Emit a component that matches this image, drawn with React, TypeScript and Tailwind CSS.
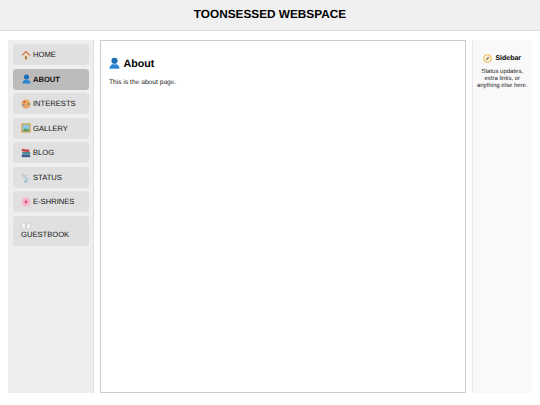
const F = { fontFamily: '"Liberation Sans", Arial, sans-serif' };

function Nav({ icon, label, active, wrap }: { icon: React.ReactNode; label: string; active?: boolean; wrap?: boolean }) {
  return (
    <div
      className={`rounded-[3.5px] px-[8px] text-[7.6px] text-[#111] ${active ? "bg-[#bbbbbb] font-bold" : "bg-[#e0e0e0]"} ${wrap ? "h-[30px] pt-[6px] leading-[8.5px]" : "flex h-[21px] items-center leading-[9px]"}`}
    >
      <span className={`${wrap ? "block h-[9px]" : "mr-[2px] inline-flex w-[10px] justify-center"}`}>{icon}</span>
      <span className={wrap ? "block" : ""}>{label}</span>
    </div>
  );
}

const Home = () => (
  <svg width="10" height="10" viewBox="0 0 12 12"><rect x="2.2" y="5" width="7.6" height="6.2" fill="#ead9c2" /><path d="M6 1 .6 6.2 1.6 7 6 2.9 10.4 7 11.4 6.2Z" fill="#d0693a" /><rect x="5" y="7.4" width="2" height="3.8" fill="#a86a3a" /></svg>
);
const Person = ({ s = 9 }: { s?: number }) => (
  <svg width={s} height={s * 1.1} viewBox="0 0 12 13"><circle cx="6" cy="4" r="3.4" fill="#1c6fb5" /><path d="M0.5 12.6C0.5 9.5 3 8 4.5 7.6L6 8.4 7.5 7.6C9 8 11.5 9.5 11.5 12.6Z" fill="#2a86d2" /></svg>
);
const Palette = () => (
  <svg width="10" height="10" viewBox="0 0 12 12"><circle cx="6" cy="6" r="5.4" fill="#eaa468" /><circle cx="4" cy="3.6" r="1.2" fill="#d84a3a" /><circle cx="7.6" cy="3.2" r="1.1" fill="#e8c040" /><circle cx="9.3" cy="6" r="1.1" fill="#5a9a50" /><circle cx="3" cy="7" r="1.1" fill="#6a90c8" /></svg>
);
const Gallery = () => (
  <svg width="10" height="10" viewBox="0 0 12 12"><rect x="0.5" y="0.5" width="11" height="11" fill="#d0a040" /><rect x="2" y="2" width="8" height="8" fill="#88c8e8" /><path d="M2 10 5 6 7 8 8.5 6.5 10 10Z" fill="#5a9a50" /></svg>
);
const Books = () => (
  <svg width="10" height="10" viewBox="0 0 12 12"><rect x="1" y="1.5" width="9" height="3" fill="#c84848" transform="rotate(8 5 3)" /><rect x="1.5" y="4.8" width="9.5" height="3" fill="#4a8a98" /><rect x="1" y="8" width="10" height="3" fill="#3a5a88" /></svg>
);
const Dish = () => (
  <svg width="10" height="11" viewBox="0 0 12 13"><path d="M1.5 1.5C1.5 6 5 9.5 9.5 9.5Z" fill="#c4dae2" stroke="#9ab8c4" strokeWidth=".6" /><path d="M5.5 5.5 8 3" stroke="#8aa8b4" strokeWidth=".8" /><path d="M5 9 3.5 12.5H8L6.8 9.8Z" fill="#8fc0d0" /></svg>
);
const Flower = () => (
  <svg width="10" height="10" viewBox="0 0 12 12"><circle cx="6" cy="6" r="5.4" fill="#f6b8cc" /><circle cx="6" cy="6" r="1.7" fill="#e04a7c" /></svg>
);
const Book = () => (
  <svg width="10" height="8" viewBox="0 0 12 9"><path d="M0.5 1H5.6V8H0.5ZM6.4 1H11.5V8H6.4Z" fill="#f2f2f2" stroke="#c4c4c4" strokeWidth=".7" /></svg>
);
const Compass = () => (
  <svg width="9" height="9" viewBox="0 0 12 12"><circle cx="6" cy="6" r="5.2" fill="#fff6dc" stroke="#e8b848" strokeWidth="1.3" /><path d="M8.6 3.4 5 5 3.4 8.6 7 7Z" fill="#8a8a70" /></svg>
);

export default function App() {
  return (
    <div style={F} className="flex h-[405px] w-[540px] flex-col overflow-hidden bg-white text-black [text-rendering:geometricPrecision]">
      <header className="flex h-[31px] shrink-0 items-center justify-center border-b border-[#dddddd] bg-[#f0f0f0] text-[11.8px] font-bold">
        TOONSESSED WEBSPACE
      </header>
      <div className="mt-[9px] flex h-[353px] gap-[6px] pl-[8px]">
        <aside className="flex w-[86px] shrink-0 flex-col gap-[3.5px] border-r-[1.5px] border-[#dddddd] bg-[#eeeeee] pl-[5px] pr-[4px] pt-[4px]">
          <Nav icon={<Home />} label="HOME" />
          <Nav icon={<Person />} label="ABOUT" active />
          <Nav icon={<Palette />} label="INTERESTS" />
          <Nav icon={<Gallery />} label="GALLERY" />
          <Nav icon={<Books />} label="BLOG" />
          <Nav icon={<Dish />} label="STATUS" />
          <Nav icon={<Flower />} label="E-SHRINES" />
          <Nav icon={<Book />} label="GUESTBOOK" wrap />
        </aside>
        <main className="w-[365.5px] shrink-0 border border-[#cccccc] px-[8px] pt-[15.5px]">
          <h2 className="flex items-center gap-[3.5px] text-[10.7px] font-bold leading-[14px]"><Person s={11} />About</h2>
          <p className="mt-[8px] text-[6.67px] leading-[8px] text-[#222]">This is the about page.</p>
        </main>
        <aside className="w-[60.5px] shrink-0 border-l-[1.5px] border-[#e6e6e6] bg-[#f9f9f9] px-[3px] pt-[14px] text-center">
          <h3 className="flex items-center justify-center gap-[3px] text-[7px] font-bold leading-[9px]"><Compass />Sidebar</h3>
          <p className="mt-[6px] text-[6px] leading-[7px] text-[#222]">Status updates, extra links, or anything else here.</p>
        </aside>
      </div>
    </div>
  );
}
